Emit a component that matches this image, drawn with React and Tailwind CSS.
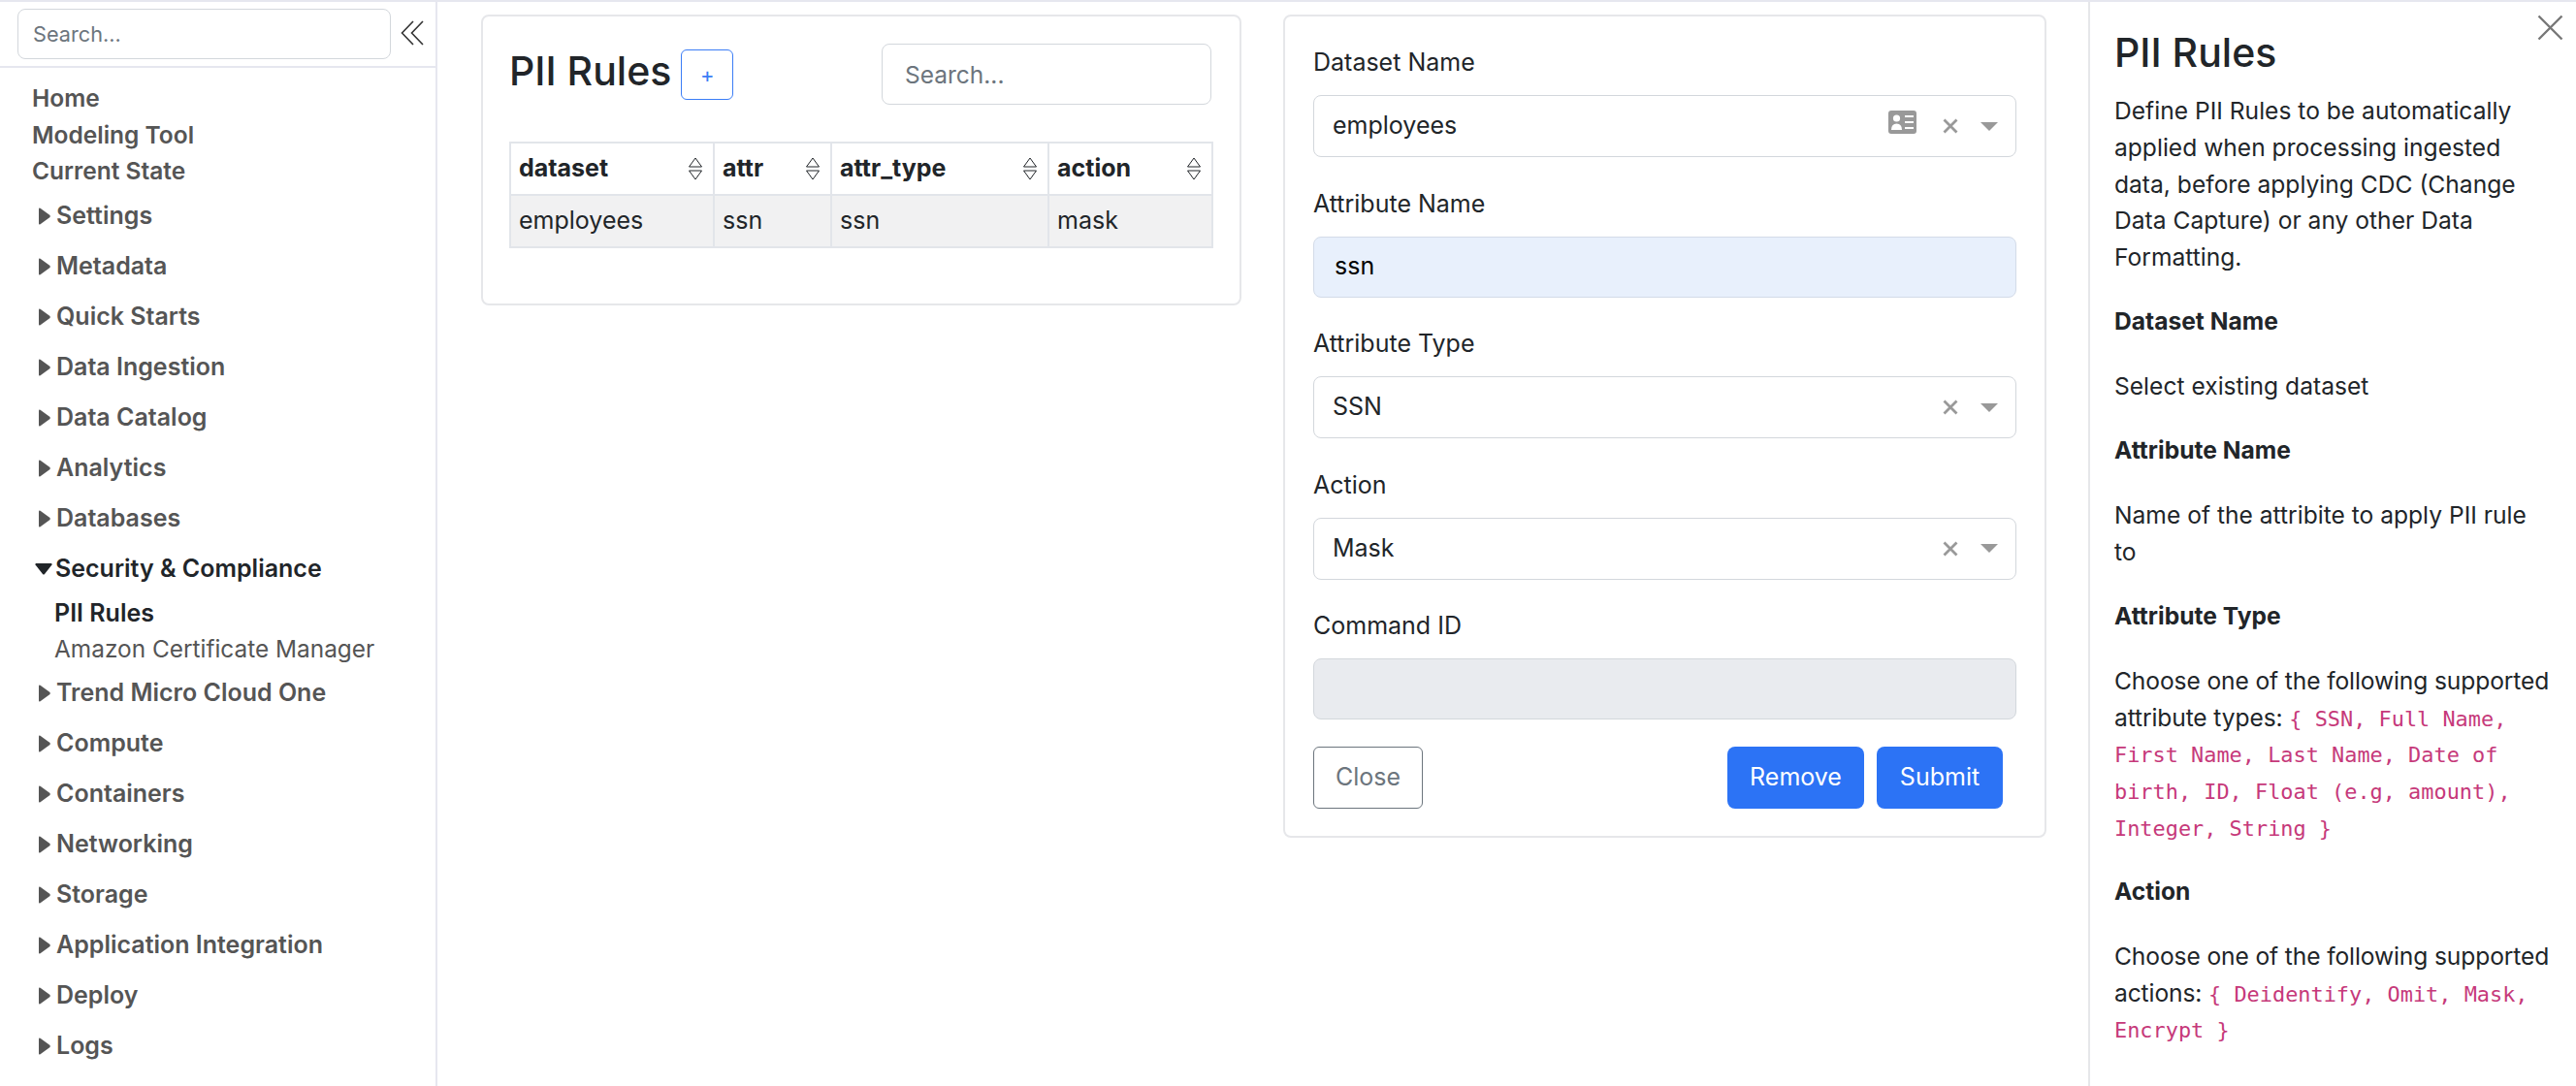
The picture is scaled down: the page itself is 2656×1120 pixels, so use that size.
import React from "react";

const collapsedTop = ["Settings", "Metadata", "Quick Starts", "Data Ingestion", "Data Catalog", "Analytics", "Databases"];
const collapsedBottom = ["Trend Micro Cloud One", "Compute", "Containers", "Networking", "Storage", "Application Integration", "Deploy", "Logs"];

function NavGroup({ label }) {
  return (
    <div className="h-[52px] flex items-center pl-[40px] text-[#555555] font-semibold">
      <svg width="12" height="18" viewBox="0 0 12 18" className="mr-[6px] shrink-0">
        <path d="M0 1.5 Q0 0 1.5 0.8 L11.5 8 Q12 9 11.5 10 L1.5 17.2 Q0 18 0 16.5 Z" fill="#555555" />
      </svg>
      <span>{label}</span>
    </div>
  );
}

function Sidebar() {
  return (
    <aside className="w-[451px] shrink-0 border-r-2 border-[#e6e7ef] h-full overflow-hidden">
      <div className="h-[68px] border-b-2 border-[#e6e7ef] flex items-start pt-[7px] pl-[18px]">
        <input
          placeholder="Search..."
          className="w-[385px] h-[52px] border-[1.5px] border-[#d3d7dc] rounded-[8px] px-[15px] text-[21.7px] outline-none placeholder:text-[#6c757d]"
        />
        <svg width="24" height="26" viewBox="0 0 24 26" className="ml-[10px] mt-[12px]" fill="none" stroke="#333333" strokeWidth="1.6">
          <path d="M13 1 L1.5 13 L13 25" />
          <path d="M23 1 L11.5 13 L23 25" />
        </svg>
      </div>
      <div className="pt-[13px] pl-[33px] text-[#555555] font-semibold text-[24.5px]">
        <div className="h-[37.5px] leading-[37.5px]">Home</div>
        <div className="h-[37.5px] leading-[37.5px]">Modeling Tool</div>
        <div className="h-[37.5px] leading-[37.5px]">Current State</div>
      </div>
      <div className="pt-[1px]">
        {collapsedTop.map((label) => (
          <NavGroup key={label} label={label} />
        ))}
        <div className="h-[52px] flex items-center pl-[36px] text-[#212529] font-semibold">
          <svg width="18" height="12" viewBox="0 0 18 12" className="mr-[3px] shrink-0">
            <path d="M1 0 H17 Q18 0.5 17.5 1.5 L10 11 Q9 12 8 11 L0.5 1.5 Q0 0.5 1 0 Z" fill="#212529" />
          </svg>
          <span>Security &amp; Compliance</span>
        </div>
        <div className="pl-[56px] pt-[1px]">
          <div className="h-[37.5px] leading-[37.5px] font-semibold text-[#212529]">PII Rules</div>
          <div className="h-[37.5px] leading-[37.5px] text-[24.4px] text-[#555555]">Amazon Certificate Manager</div>
        </div>
        {collapsedBottom.map((label) => (
          <NavGroup key={label} label={label} />
        ))}
      </div>
    </aside>
  );
}

function SortIcon() {
  return (
    <svg width="16" height="24" viewBox="0 0 16 24" fill="none" stroke="#212529" strokeWidth="1" className="shrink-0">
      <path d="M8 1 L14.5 10 H1.5 Z" />
      <path d="M8 23 L14.5 14 H1.5 Z" />
    </svg>
  );
}

function HeadCell({ label, width }) {
  return (
    <th className={`${width} border-2 border-[#e2e5ea] h-[54px] pl-[8px] pr-[10px] text-left font-bold`}>
      <div className="flex items-center justify-between">
        <span>{label}</span>
        <SortIcon />
      </div>
    </th>
  );
}

function RulesCard() {
  return (
    <section className="w-[784px] h-[300px] border-2 border-[#e6e7ea] rounded-[8px] pt-[28px] pl-[27px]">
      <div className="w-[724px] flex items-start justify-between">
        <div className="flex items-start">
          <h2 className="text-[41px] leading-[56px] font-medium text-[#212529]">PII Rules</h2>
          <button className="ml-[10px] mt-[6px] w-[54px] h-[52px] border-[1.5px] border-[#3b7df6] rounded-[6px] text-[#3b7df6] text-[22px]">+</button>
        </div>
        <input
          placeholder="Search..."
          className="w-[340px] h-[63px] border-[1.5px] border-[#d3d7dc] rounded-[8px] px-[23px] text-[24.5px] outline-none placeholder:text-[#6c757d]"
        />
      </div>
      <table className="mt-[38px] w-[724px] border-collapse table-fixed">
        <thead>
          <tr>
            <HeadCell label="dataset" width="w-[210px]" />
            <HeadCell label="attr" width="w-[121px]" />
            <HeadCell label="attr_type" width="w-[224px]" />
            <HeadCell label="action" width="w-[169px]" />
          </tr>
        </thead>
        <tbody>
          <tr className="bg-[#f1f1f2]">
            {["employees", "ssn", "ssn", "mask"].map((cell, i) => (
              <td key={i} className="border-2 border-[#e2e5ea] h-[54px] pl-[8px]">{cell}</td>
            ))}
          </tr>
        </tbody>
      </table>
    </section>
  );
}

function SelectField({ label, value, card, className }) {
  return (
    <div className={className}>
      <div className="h-[36px] leading-[36px]">{label}</div>
      <div className="mt-[16px] h-[64px] border-[1.5px] border-[#d3d7dc] rounded-[8px] flex items-center pl-[19px] pr-[18px]">
        <span className="flex-1">{value}</span>
        {card && (
          <svg width="29" height="24" viewBox="0 0 29 24" className="mr-[27px] -mt-[8px]">
            <rect width="29" height="24" rx="3" fill="#999999" />
            <circle cx="8.5" cy="8" r="3.6" fill="#ffffff" />
            <path d="M3 20 Q3 13.5 8.5 13.5 Q14 13.5 14 20 Z" fill="#ffffff" />
            <path d="M17 6 H26 M17 12 H26 M17 18 H26" stroke="#ffffff" strokeWidth="2" />
          </svg>
        )}
        <svg width="16" height="16" viewBox="0 0 16 16" stroke="#999999" strokeWidth="2.8" className="mr-[23px]">
          <path d="M1.5 1.5 L14.5 14.5 M14.5 1.5 L1.5 14.5" />
        </svg>
        <svg width="18" height="9" viewBox="0 0 18 9">
          <path d="M0 0 H18 L9 9 Z" fill="#999999" />
        </svg>
      </div>
    </div>
  );
}

function InputField({ label, value, disabled, className }) {
  return (
    <div className={className}>
      <div className="h-[36px] leading-[36px]">{label}</div>
      <div
        className={
          disabled
            ? "mt-[16px] h-[63px] border-[1.5px] border-[#d3d7dc] rounded-[8px] bg-[#e9ebef]"
            : "mt-[16px] h-[63px] border-[1.5px] border-[#d3dbe8] rounded-[8px] bg-[#e8f0fc] flex items-center pl-[21px] text-black"
        }
      >
        {value}
      </div>
    </div>
  );
}

function FormCard() {
  return (
    <section className="w-[787px] h-[849px] border-2 border-[#e6e7ea] rounded-[8px] pt-[29px] px-[29px]">
      <SelectField label="Dataset Name" value="employees" card />
      <InputField label="Attribute Name" value="ssn" className="mt-[29.5px]" />
      <SelectField label="Attribute Type" value="SSN" className="mt-[29.5px]" />
      <SelectField label="Action" value="Mask" className="mt-[29.5px]" />
      <InputField label="Command ID" disabled className="mt-[29.5px]" />
      <div className="mt-[28px] flex items-center">
        <button className="w-[113px] h-[64px] border-[1.5px] border-[#6c757d] rounded-[6px] text-[#6c757d]">Close</button>
        <button className="ml-auto w-[141px] h-[64px] rounded-[8px] bg-[#2c73f5] text-white">Remove</button>
        <button className="ml-[13px] mr-[14px] w-[130px] h-[64px] rounded-[8px] bg-[#2c73f5] text-white">Submit</button>
      </div>
    </section>
  );
}

function Code({ children }) {
  return <code className="text-[#c6397a] text-[21.9px] leading-none tracking-normal" style={{ fontFamily: "'DejaVu Sans Mono', monospace" }}>{children}</code>;
}

function HelpPanel() {
  return (
    <aside className="relative w-[503px] shrink-0 border-l-2 border-[#e6e7ea] h-full overflow-hidden pl-[25px] pr-[24px] text-[24.6px] leading-[37.8px]">
      <button className="absolute top-[13px] right-[13px]">
        <svg width="27" height="27" viewBox="0 0 27 27" stroke="#777777" strokeWidth="2.4">
          <path d="M1.5 1.5 L25.5 25.5 M25.5 1.5 L1.5 25.5" />
        </svg>
      </button>
      <h2 className="text-[41px] leading-[56px] font-medium mt-[24px]">PII Rules</h2>
      <p className="mt-[14px]">
        Define PII Rules to be automatically applied when processing ingested data, before applying CDC (Change Data Capture) or any other Data Formatting.
      </p>
      <p className="mt-[28.5px] font-bold">Dataset Name</p>
      <p className="mt-[28.7px]">Select existing dataset</p>
      <p className="mt-[28.7px] font-bold">Attribute Name</p>
      <p className="mt-[28.7px]">Name of the attribite to apply PII rule to</p>
      <p className="mt-[28.7px] font-bold">Attribute Type</p>
      <p className="mt-[28.7px] tracking-[-0.12px]">
        Choose one of the following supported attribute types:{" "}
        <Code>{"{ SSN, Full Name, First Name, Last Name, Date of birth, ID, Float (e.g, amount), Integer, String }"}</Code>
      </p>
      <p className="mt-[28.7px] font-bold">Action</p>
      <p className="mt-[28.7px] tracking-[-0.12px]">
        Choose one of the following supported actions:{" "}
        <Code>{"{ Deidentify, Omit, Mask, Encrypt }"}</Code>
      </p>
    </aside>
  );
}

export default function App() {
  return (
    <div className="h-[1120px] w-[2656px] overflow-hidden bg-white border-t-2 border-[#e6e7ef] flex text-[25px] text-[#212529]" style={{ fontFamily: "Inter, sans-serif" }}>
      <Sidebar />
      <main className="flex-1 flex items-start gap-[43px] pt-[13px] pl-[45px]">
        <RulesCard />
        <FormCard />
      </main>
      <HelpPanel />
    </div>
  );
}
